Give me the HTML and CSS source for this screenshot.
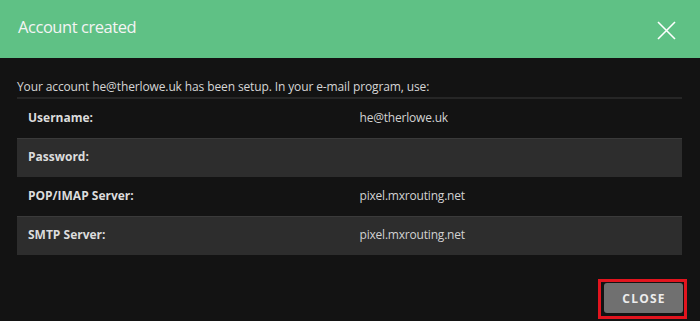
FILE: index.html
```html
<!DOCTYPE html>
<html>
<head>
<meta charset="utf-8">
<link rel="stylesheet" href="styles.css">
</head>
<body>
<div class="modal">
  <div class="modal-header">
    <h1 class="modal-title">Account created</h1>
    <svg class="close-icon" width="19" height="19" viewBox="0 0 19 19"><path d="M1 1 L18 18 M18 1 L1 18" stroke="#ffffff" stroke-width="1.6" fill="none"/></svg>
  </div>
  <div class="modal-body">
    <p class="intro">Your account he@therlowe.uk has been setup. In your e-mail program, use:</p>
    <table class="info">
      <tr><td class="label">Username:</td><td class="value">he@therlowe.uk</td></tr>
      <tr class="stripe"><td class="label">Password:</td><td class="value"></td></tr>
      <tr><td class="label">POP/IMAP Server:</td><td class="value">pixel.mxrouting.net</td></tr>
      <tr class="stripe"><td class="label">SMTP Server:</td><td class="value">pixel.mxrouting.net</td></tr>
    </table>
  </div>
  <div class="modal-footer">
    <button class="btn-close">CLOSE<span class="highlight"></span></button>
  </div>
</div>
</body>
</html>
```
FILE: styles.css
```css
html, body {
  margin: 0;
  padding: 0;
  background: #131313;
  font-family: "Open Sans", "Noto Sans", sans-serif;
}
.modal {
  width: 700px;
  height: 321px;
  overflow: hidden;
  background: #131313;
}
.modal-header {
  height: 58px;
  background: #5fc185;
  display: flex;
  align-items: center;
  justify-content: space-between;
  padding: 0 24px 0 18px;
  box-sizing: border-box;
}
.modal-title {
  margin: 0;
  font-size: 16.5px;
  letter-spacing: -0.45px;
  font-weight: 400;
  color: #f4f4f4;
  line-height: 1;
  margin-top: -3px;
}
.close-icon {
  display: block;
  margin-top: 2px;
}
.modal-body {
  padding: 21px 18px 0 17px;
}
.intro {
  margin: 0;
  font-size: 12px;
  letter-spacing: -0.12px;
  line-height: 16px;
  color: #d6d6d6;
  padding-bottom: 2px;
  border-bottom: 2px solid #262626;
}
.info {
  width: 100%;
  border-collapse: collapse;
  font-size: 12px;
  color: #d2d2d2;
}
.info td {
  height: 39px;
  padding: 0 11px;
  box-sizing: border-box;
  vertical-align: middle;
  width: 50%;
}
.info .label {
  font-weight: 700;
  color: #dcdcdc;
  padding-bottom: 2px;
}
.info .value {
  padding-left: 10px;
  letter-spacing: -0.2px;
  padding-bottom: 2px;
}
.info .stripe td {
  background: #2d2d2d;
  border-top: 1px solid #3a3a3a;
}
.modal-footer {
  display: flex;
  justify-content: flex-end;
  padding: 28px 17px 0 0;
}
.btn-close {
  position: relative;
  width: 79px;
  height: 30px;
  border: none;
  border-radius: 3px;
  background: #707070;
  color: #ececec;
  font-family: "Open Sans", sans-serif;
  font-weight: 700;
  font-size: 12px;
  letter-spacing: 1.2px;
  padding: 0 0 0 1px;
  cursor: pointer;
}
.highlight {
  position: absolute;
  left: -6px;
  right: -4px;
  top: -4px;
  bottom: -6px;
  border: 3px solid #e2141e;
  pointer-events: none;
}
```
